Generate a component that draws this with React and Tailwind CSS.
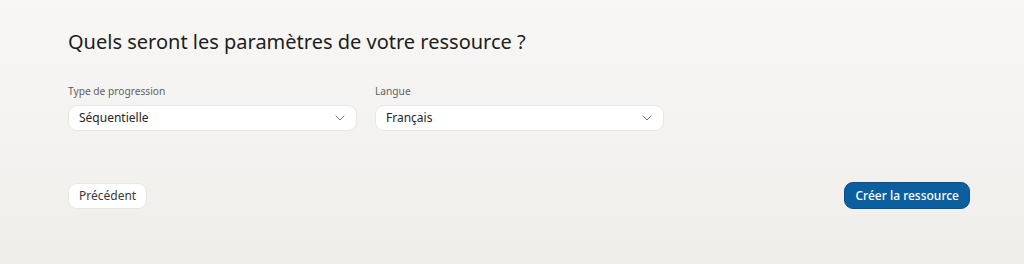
import { ChevronDown } from 'lucide-react'

function Select({ label, value }) {
  return (
    <div className="flex flex-col w-[289px]">
      <span className="text-[10.2px] text-[#5f5f5f] leading-4 mb-[6px]">{label}</span>
      <div className="flex items-center justify-between h-[26px] pl-[10px] pr-[8px] bg-white rounded-[9px] border border-[#e9e7e4]">
        <span className="text-[12px] text-[#262626]">{value}</span>
        <ChevronDown className="w-[16px] h-[16px] text-[#666]" strokeWidth={1.4} />
      </div>
    </div>
  )
}

export default function App() {
  return (
    <div
      className="w-[1024px] h-[264px] bg-gradient-to-b from-[#f8f7f6] to-[#f0eeeb] pl-[68px] pr-[54px] pt-[26px]"
      style={{ fontFamily: '"Noto Sans", "Open Sans", sans-serif' }}
    >
      <h1 className="text-[20px] leading-8 text-[#1d1d1d]">Quels seront les paramètres de votre ressource ?</h1>
      <div className="flex gap-[18px] mt-[25px]">
        <Select label="Type de progression" value="Séquentielle" />
        <Select label="Langue" value="Français" />
      </div>
      <div className="flex justify-between items-center mt-[51px]">
        <button className="h-[26px] px-[10px] bg-white rounded-[9px] border border-[#e9e7e4] text-[12px] text-[#3a3a3a]">
          Précédent
        </button>
        <button className="h-[27px] px-[10px] bg-[#0b5f9f] rounded-[9px] border border-[#0a4f86] text-[12px] font-medium text-white">
          Créer la ressource
        </button>
      </div>
    </div>
  )
}
